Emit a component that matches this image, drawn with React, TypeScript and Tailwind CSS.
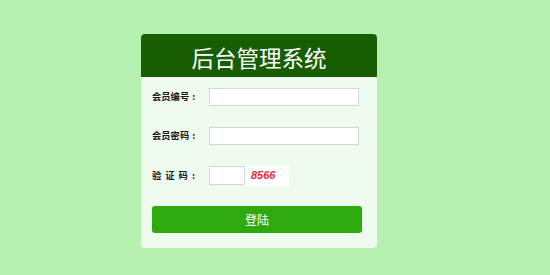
import React from "react";

export default function App() {
  const font = { fontFamily: '"Noto Sans CJK SC", "Noto Sans", sans-serif' };
  return (
    <div className="w-[550px] h-[275px] bg-[#b5f0b0] pl-[141px] pt-[34px]" style={font}>
      <div className="w-[236px] h-[214px] rounded-[4px] overflow-hidden bg-[#effbef] flex flex-col">
        <div className="h-[43px] bg-[#175e00] flex items-center justify-center pt-[3px]">
          <span className="text-white text-[22.5px] leading-none">后台管理系统</span>
        </div>
        <div className="flex flex-col pl-[11px] pt-[11px]">
          <div className="flex items-center h-[18px]">
            <span className="w-[57px] text-[9.3px] font-bold text-[#1a1a1a]">
              会员编号<span className="ml-[3px]">:</span>
            </span>
            <input className="w-[150px] h-[18px] bg-white border border-[#d6d6d6] outline-none" />
          </div>
          <div className="flex items-center h-[18px] mt-[21px]">
            <span className="w-[57px] text-[9.3px] font-bold text-[#1a1a1a]">
              会员密码<span className="ml-[3px]">:</span>
            </span>
            <input type="password" className="w-[150px] h-[18px] bg-white border border-[#d6d6d6] outline-none" />
          </div>
          <div className="flex items-center h-[19px] mt-[21px]">
            <span className="w-[57px] text-[9.3px] font-bold text-[#1a1a1a] tracking-[4px]">验证码:</span>
            <input className="w-[36px] h-[19px] bg-white border border-[#d6d6d6] outline-none" />
            <div className="w-[44px] h-[20px] bg-white flex items-center pl-[6px]">
              <span
                className="text-[11px] font-bold italic text-[#e8283c] leading-none"
                style={{ fontFamily: '"Liberation Sans", Arial, sans-serif' }}
              >
                8566
              </span>
            </div>
          </div>
          <button className="mt-[21px] w-[210px] h-[27px] rounded-[3px] bg-[#2ea90e] text-white text-[12px] flex items-center justify-center">
            登陆
          </button>
        </div>
      </div>
    </div>
  );
}
